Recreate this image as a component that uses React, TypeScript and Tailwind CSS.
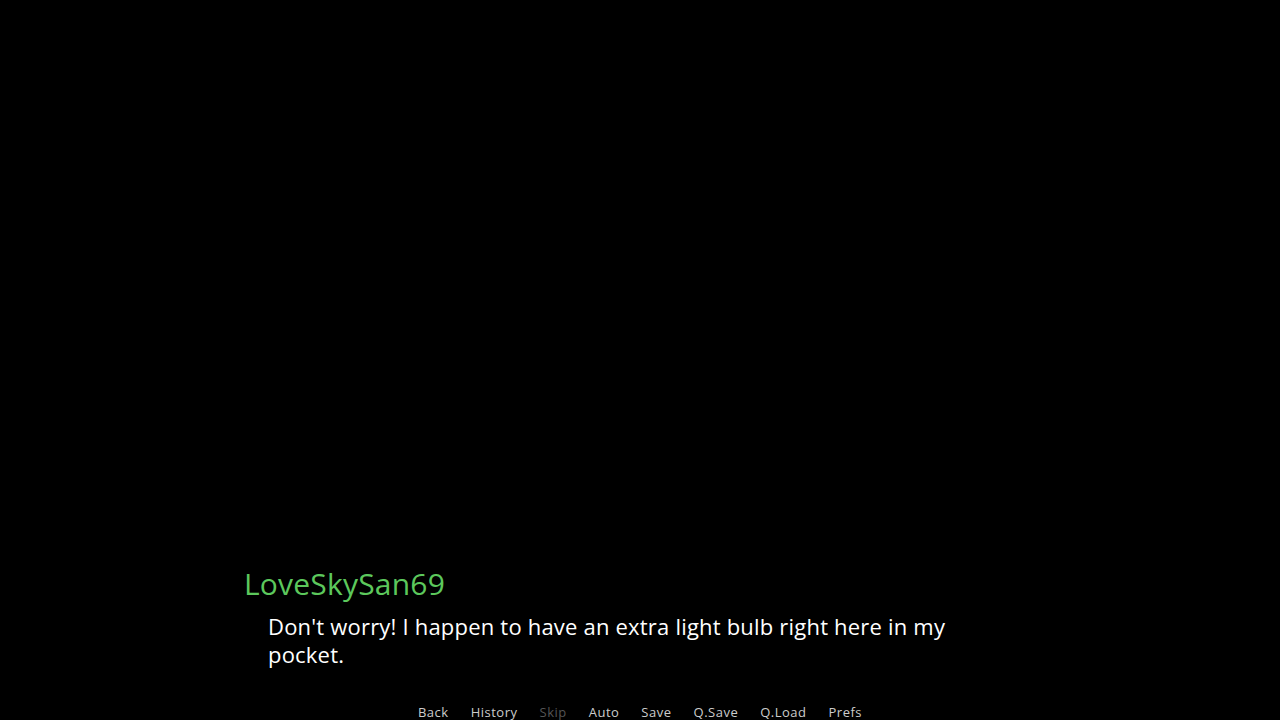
const menu = [
  { label: "Back", dim: false },
  { label: "History", dim: false },
  { label: "Skip", dim: true },
  { label: "Auto", dim: false },
  { label: "Save", dim: false },
  { label: "Q.Save", dim: false },
  { label: "Q.Load", dim: false },
  { label: "Prefs", dim: false },
];

export default function App() {
  return (
    <main className="w-[1280px] h-[720px] bg-black flex flex-col overflow-hidden font-['Open_Sans',sans-serif]">
      <div className="flex-1" />
      <section className="pl-[244px]">
        <div className="text-[30px] leading-[36px] tracking-[0.2px] text-[#5cc85c]">LoveSkySan69</div>
        <p className="mt-[10px] ml-[24px] w-[700px] text-[22px] leading-[28px] tracking-[0.2px] text-white">
          Don't worry! I happen to have an extra light bulb right here in my pocket.
        </p>
      </section>
      <nav className="mt-[36px] h-[16px] flex justify-center gap-[22px] text-[13px] leading-[16px] tracking-[0.5px]">
        {menu.map((m) => (
          <span key={m.label} className={m.dim ? "text-[#555555]" : "text-[#cccccc]"}>
            {m.label}
          </span>
        ))}
      </nav>
    </main>
  );
}
